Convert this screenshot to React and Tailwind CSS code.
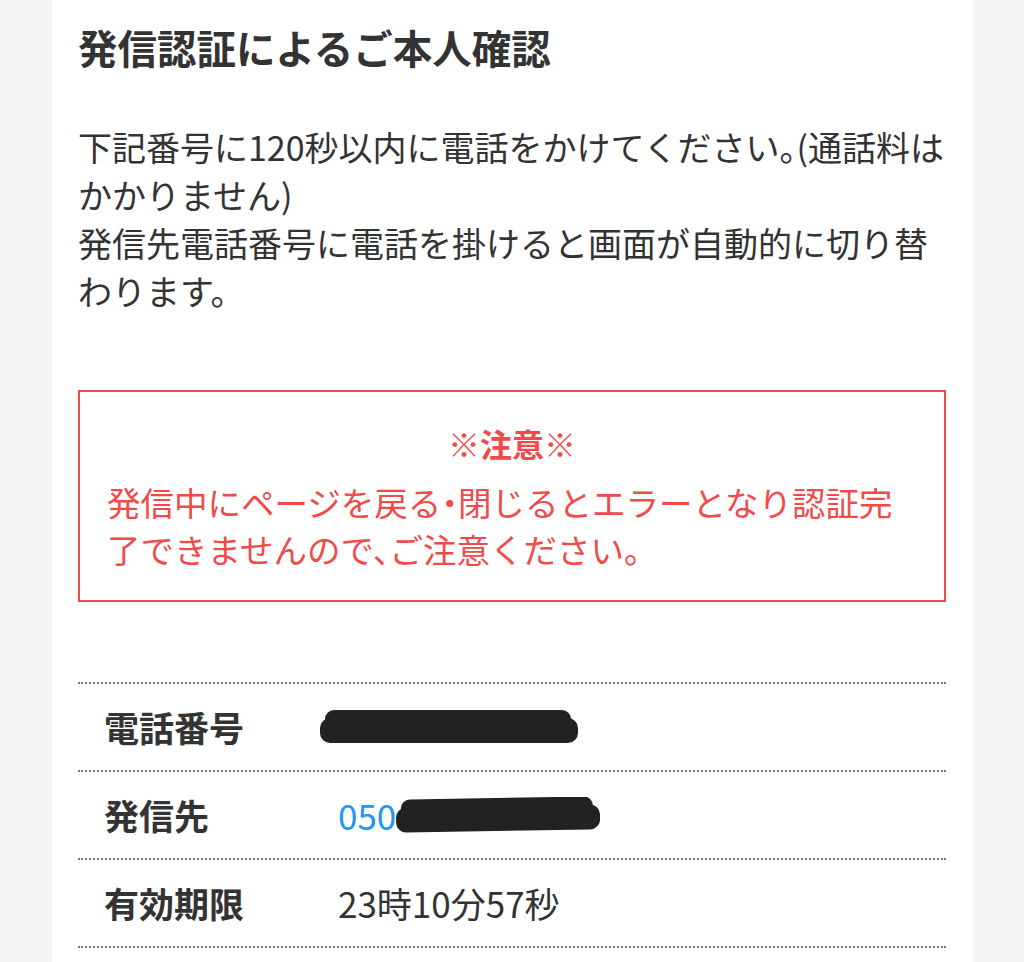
import React from 'react'

const Redacted = ({ width, height, tilt = 0 }) => (
  <svg width={width} height={height} viewBox={`0 0 ${width} ${height}`} className="shrink-0">
    <g transform={`rotate(${tilt} ${width / 2} ${height / 2})`}>
      <rect x="5" y="1" width={width - 12} height={height - 10} rx="9" fill="#222" />
      <rect x="0" y="9" width={width} height={height - 11} rx="10" fill="#222" />
    </g>
  </svg>
)

const rows = [
  {
    label: '電話番号',
    value: (
      <div className="-ml-[18px]">
        <Redacted width={258} height={36} />
      </div>
    ),
  },
  {
    label: '発信先',
    value: (
      <div className="flex items-center">
        <span className="text-[#2196f3]">050</span>
        <Redacted width={204} height={36} tilt={-1} />
      </div>
    ),
  },
  { label: '有効期限', value: <span>23時10分57秒</span> },
]

const App = () => {
  return (
    <div
      className="h-[962px] overflow-hidden bg-[#f4f4f4] text-[#333]"
      style={{ fontFamily: '"Noto Sans CJK JP", "Noto Sans", sans-serif' }}
    >
      <div className="ml-[52px] w-[921px] h-full bg-white pl-[26px] pr-[27px] pt-[20px]">
        <h1 className="text-[39.5px] font-bold leading-[53px]">発信認証によるご本人確認</h1>

        {/* halt: half-width punctuation like the original font */}
        <p className="mt-[50px] text-[34px] leading-[48px] [font-feature-settings:'halt']">
          下記番号に120秒以内に電話をかけてください。(通話料はかかりません)
          <br />
          発信先電話番号に電話を掛けると画面が自動的に切り替わります。
        </p>

        <div className="mt-[75px] border-2 border-[#f04b4b] px-[27px] pt-[28px] pb-[28px] text-[#f04b4b]">
          <p className="text-center text-[32px] font-bold leading-[47px]">※注意※</p>
          <p className="mt-[11px] text-[33.5px] leading-[47px] [font-feature-settings:'halt']">
            発信中にページを戻る・閉じるとエラーとなり認証完了できませんので、ご注意ください。
          </p>
        </div>

        <div className="mt-[80px] border-t-2 border-dotted border-[#777]">
          {rows.map((row) => (
            <div
              key={row.label}
              className="flex h-[88px] items-center border-b-2 border-dotted border-[#777] pl-[26px] text-[35px]"
            >
              <div className="w-[234px] shrink-0 font-bold">{row.label}</div>
              <div>{row.value}</div>
            </div>
          ))}
        </div>
      </div>
    </div>
  )
}

export default App
